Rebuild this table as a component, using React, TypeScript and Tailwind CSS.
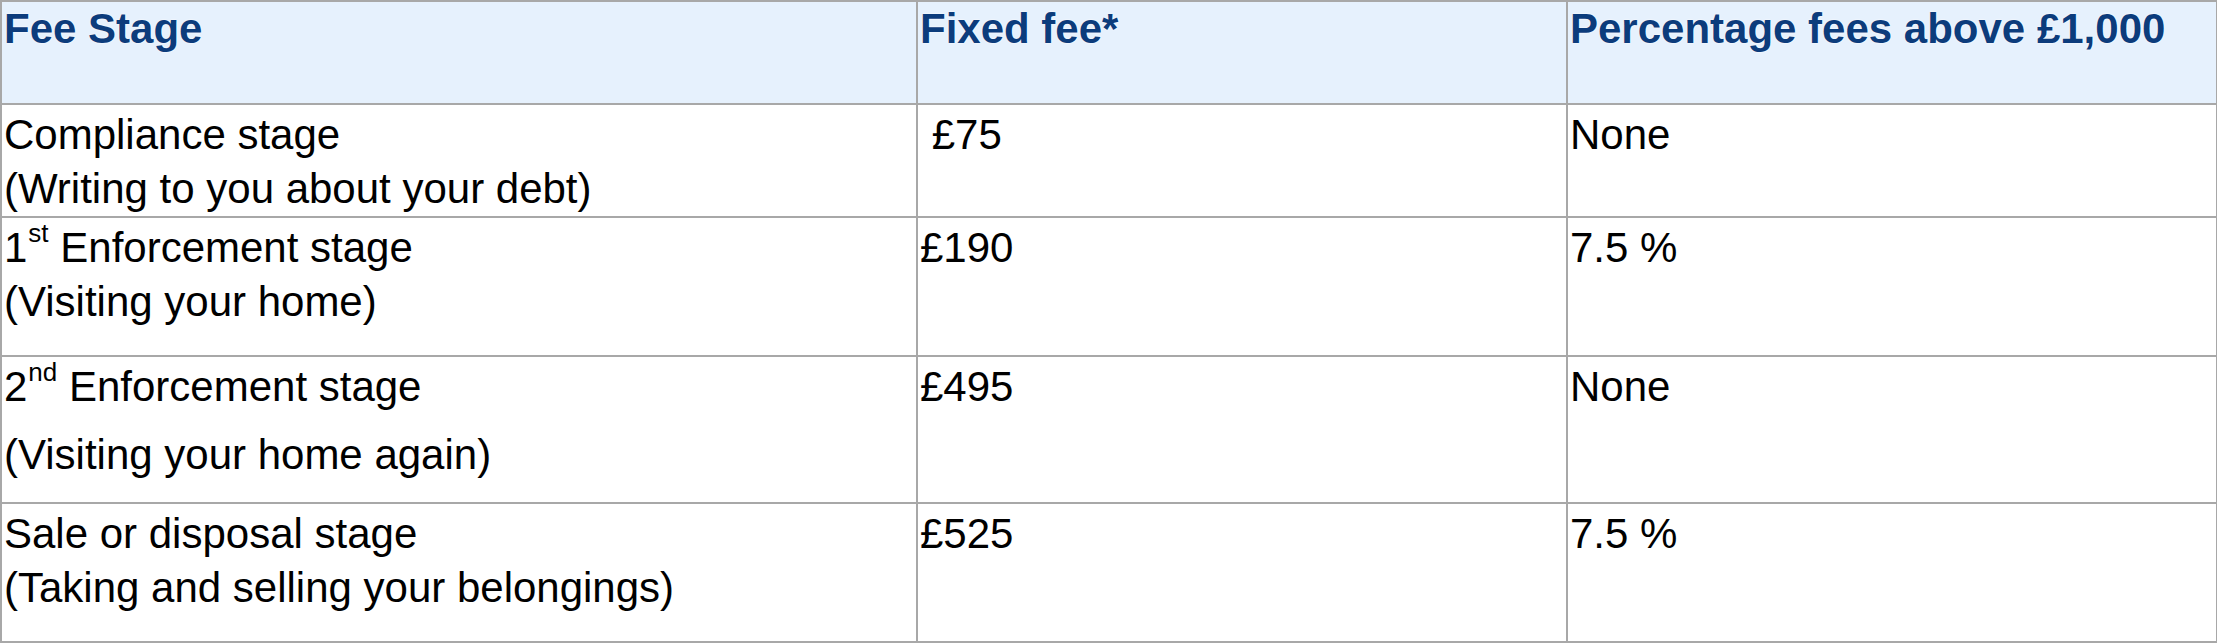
const rows = [
  {
    stage: 'Compliance stage',
    sup: '',
    rest: '',
    note: '(Writing to you about your debt)',
    fee: '\u00a0£75',
    pct: 'None',
    h: 'h-[110px]',
    gap: '',
  },
  {
    stage: '1',
    sup: 'st',
    rest: ' Enforcement stage',
    note: '(Visiting your home)',
    fee: '£190',
    pct: '7.5 %',
    h: 'h-[139px]',
    gap: '',
  },
  {
    stage: '2',
    sup: 'nd',
    rest: ' Enforcement stage',
    note: '(Visiting your home again)',
    fee: '£495',
    pct: 'None',
    h: 'h-[147px]',
    gap: 'mt-[14px]',
  },
  {
    stage: 'Sale or disposal stage',
    sup: '',
    rest: '',
    note: '(Taking and selling your belongings)',
    fee: '£525',
    pct: '7.5 %',
    h: 'h-[139px]',
    gap: '',
  },
]

const cell = 'border-2 border-[#a8a8a8] align-top px-[2px] pt-[3px]'
const head =
  'border-2 border-[#a8a8a8] align-top px-[2px] pt-0 bg-[#e6f1fd] text-left font-bold text-[#0c3c7c] [text-shadow:0_0_2px_#ffffff,0_0_1px_#ffffff]'

export default function App() {
  return (
    <div className="bg-white w-[2217px] h-[644px] font-['Liberation_Sans',Arial,sans-serif] text-[42px] leading-[54px] text-black">
      <table className="table-fixed border-collapse w-[2216px]">
        <colgroup>
          <col className="w-[916px]" />
          <col className="w-[650px]" />
          <col className="w-[650px]" />
        </colgroup>
        <thead>
          <tr className="h-[103px]">
            <th className={head}>Fee Stage</th>
            <th className={head}>Fixed fee*</th>
            <th className={head}>Percentage fees above £1,000</th>
          </tr>
        </thead>
        <tbody>
          {rows.map((r) => (
            <tr key={r.note} className={r.h}>
              <td className={cell}>
                <div>
                  {r.stage}
                  {r.sup && (
                    <sup className="text-[26px] relative top-[-1px] align-top leading-none ml-[1px]">
                      {r.sup}
                    </sup>
                  )}
                  {r.rest}
                </div>
                <div className={r.gap}>{r.note}</div>
              </td>
              <td className={cell}>{r.fee}</td>
              <td className={cell}>{r.pct}</td>
            </tr>
          ))}
        </tbody>
      </table>
    </div>
  )
}
